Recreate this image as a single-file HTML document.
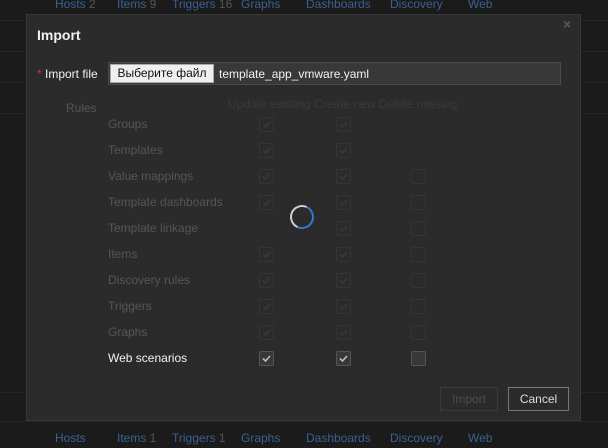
<!DOCTYPE html>
<html><head><style>
body{margin:0;width:608px;height:448px;background:#1b1b1b;font-family:"Liberation Sans",Arial,sans-serif;font-size:12px;position:relative;overflow:hidden}
.nav{position:absolute;color:#3a6190;font-size:12px;white-space:nowrap}
.nav span{color:#555}
.hl{position:absolute;left:0;width:608px;height:1px;background:#262626}
.dlg{position:absolute;left:26px;top:14px;width:555px;height:407px;background:#2b2b2b;border:1px solid #383838;box-sizing:border-box}
.a{position:absolute;white-space:nowrap}
.lbl{color:#565656;font-size:12px}
.cb{position:absolute;width:15px;height:15px;border:1px solid #353535;box-sizing:border-box;border-radius:2px}
.cb svg{position:absolute;left:1px;top:1px}
</style></head><body>
<div class="hl" style="top:20px"></div><div class="hl" style="top:51px"></div><div class="hl" style="top:82px"></div><div class="hl" style="top:113px"></div><div class="hl" style="top:392px"></div><div class="hl" style="top:421px"></div>
<div class="nav" style="left:55px;top:-3px">Hosts <span>2</span></div>
<div class="nav" style="left:117px;top:-3px">Items <span>9</span></div>
<div class="nav" style="left:172px;top:-3px">Triggers <span>16</span></div>
<div class="nav" style="left:241px;top:-3px">Graphs</div>
<div class="nav" style="left:306px;top:-3px">Dashboards</div>
<div class="nav" style="left:390px;top:-3px">Discovery</div>
<div class="nav" style="left:468px;top:-3px">Web</div>
<div class="nav" style="left:55px;top:431px">Hosts</div>
<div class="nav" style="left:117px;top:431px">Items <span>1</span></div>
<div class="nav" style="left:172px;top:431px">Triggers <span>1</span></div>
<div class="nav" style="left:241px;top:431px">Graphs</div>
<div class="nav" style="left:306px;top:431px">Dashboards</div>
<div class="nav" style="left:390px;top:431px">Discovery</div>
<div class="nav" style="left:468px;top:431px">Web</div>
<div class="dlg"></div>
<div class="a" style="left:37px;top:27px;color:#f2f2f2;font-weight:bold;font-size:14px">Import</div>
<div class="a" style="left:563px;top:16px;color:#5a5a5a;font-size:14px;font-weight:bold">×</div>
<div class="a" style="left:37px;top:67px;color:#f2f2f2"><span style="color:#c33">*</span> Import file</div>
<div class="a" style="left:108px;top:62px;width:453px;height:23px;background:#383838;border:1px solid #4a4a4a;box-sizing:border-box"></div>
<div class="a" style="left:110px;top:64px;width:104px;height:19px;background:#efefef;border:1px solid #aaa;box-sizing:border-box;color:#111;text-align:center;line-height:17px">Выберите файл</div>
<div class="a" style="left:219px;top:67px;color:#f2f2f2">template_app_vmware.yaml</div>
<div class="a lbl" style="left:66px;top:101px">Rules</div>
<div class="a" style="left:228px;top:97px;color:#3a3a3a">Update existing Create new Delete missing</div>
<div id="rows"></div>
<div class="a" style="left:290px;top:205px;width:20px;height:20px;border-radius:50%;border:2px solid #cfcfcf;border-right-color:#2f7bd0;border-bottom-color:#2f7bd0;transform:rotate(-20deg)"></div>
<div class="a" style="left:440px;top:387px;width:58px;height:24px;border:1px solid #3a3a3a;box-sizing:border-box;color:#4e4e4e;text-align:center;line-height:22px">Import</div>
<div class="a" style="left:508px;top:387px;width:61px;height:24px;border:1px solid #777;box-sizing:border-box;color:#ddd;text-align:center;line-height:22px">Cancel</div>
<script>
var rows=[["Groups",1,1,0],["Templates",1,1,0],["Value mappings",1,1,1],["Template dashboards",1,1,1],["Template linkage",0,1,1],["Items",1,1,1],["Discovery rules",1,1,1],["Triggers",1,1,1],["Graphs",1,1,1],["Web scenarios",1,1,1]];
var h="";rows.forEach(function(r,i){var y=117+26*i;var last=i==9;
h+='<div class="a" style="left:108px;top:'+(y)+'px;color:'+(last?'#f2f2f2':'#565656')+'">'+r[0]+'</div>';
[[259,1],[336,1],[411,0]].forEach(function(c,j){if(!r[j+1])return;var ck=j<2;
h+='<div class="cb" style="left:'+c[0]+'px;top:'+(y)+'px;'+(last?'background:#383838;border-color:#555':'')+'">'+(ck?'<svg width="11" height="11"><path d="M2 5.5 L4.5 8 L9 3" fill="none" stroke="'+(last?'#bbb':'#3a3a3a')+'" stroke-width="1.6"/></svg>':'')+'</div>';});});
document.getElementById("rows").innerHTML=h;
</script>
</body></html>
